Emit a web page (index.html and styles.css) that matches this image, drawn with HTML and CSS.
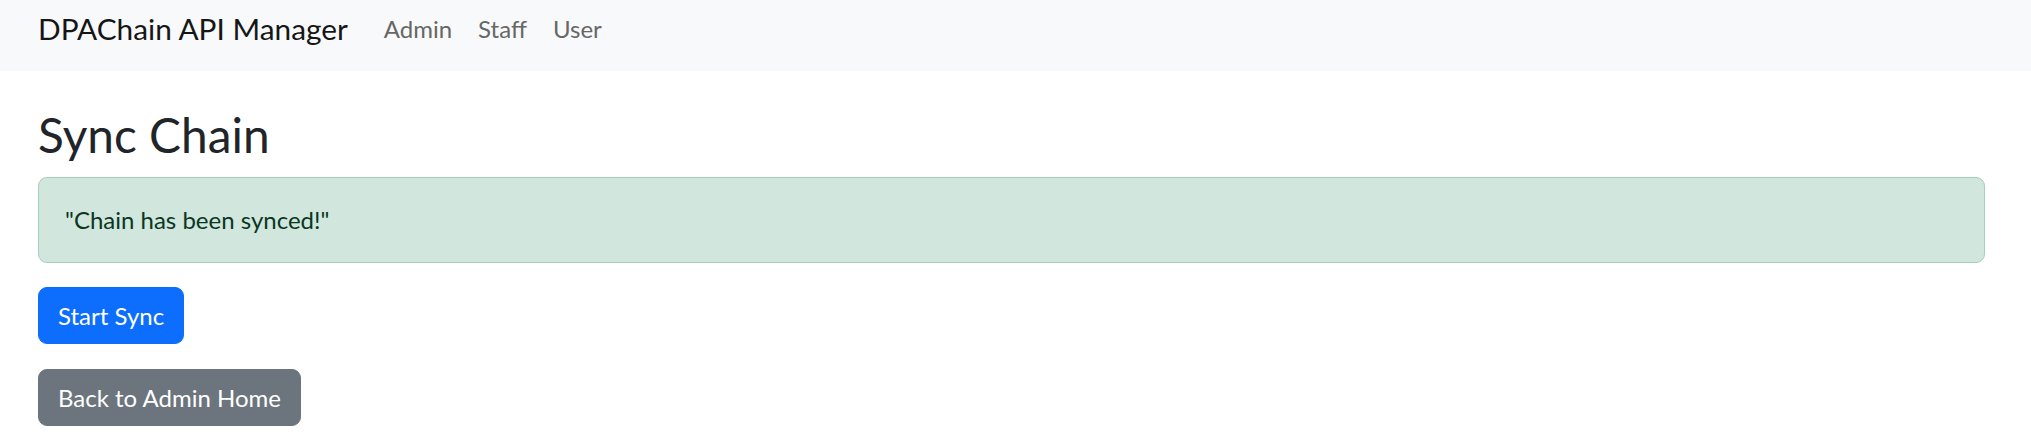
FILE: index.html
```html
<!DOCTYPE html>
<html lang="en">
<head>
<meta charset="utf-8">
<title>Sync Chain</title>
<link rel="stylesheet" href="styles.css">
</head>
<body>
<nav class="navbar">
  <a class="brand" href="#">DPAChain API Manager</a>
  <ul class="nav">
    <li><a class="nav-link" href="#">Admin</a></li>
    <li><a class="nav-link" href="#">Staff</a></li>
    <li><a class="nav-link" href="#">User</a></li>
  </ul>
</nav>
<main class="container">
  <h1 class="title">Sync Chain</h1>
  <div class="alert">"Chain has been synced!"</div>
  <div class="actions">
    <button class="btn btn-primary" type="button">Start Sync</button>
    <a class="btn btn-secondary" href="#">Back to Admin Home</a>
  </div>
</main>
</body>
</html>
```
FILE: styles.css
```css
* { box-sizing: border-box; }
body {
  margin: 0;
  font-family: Lato, "Liberation Sans", sans-serif;
  font-size: 24px;
  line-height: 1.5;
  color: #212529;
  background: #fff;
}
a { text-decoration: none; }

.navbar {
  display: flex;
  align-items: flex-start;
  height: 71px;
  padding: 6px 46px 0 38px;
  background: #f8f9fa;
}
.brand {
  font-size: 29.8px;
  line-height: 45px;
  color: #161616;
  margin-right: 23px;
}
.nav {
  display: flex;
  list-style: none;
  margin: 0;
  padding: 0;
}
.nav-link {
  display: block;
  padding: 0 13px;
  font-size: 24px;
  line-height: 45px;
  color: #676767;
}

.container {
  padding: 0 46px 0 38px;
}
.title {
  margin: 35px 0 14px;
  font-size: 47.8px;
  font-weight: 400;
  line-height: 1.2;
  color: #212529;
}
.alert {
  padding: 24px 24px 24px 26px;
  margin-bottom: 24px;
  line-height: 36px;
  color: #0a3622;
  background: #d1e7dd;
  border: 1px solid #a3cfbb;
  border-radius: 9px;
}
.actions {
  display: flex;
  flex-direction: column;
  align-items: flex-start;
  gap: 25px;
}
.btn {
  display: inline-block;
  padding: 9px 19px;
  font-family: inherit;
  font-size: 24px;
  line-height: 37px;
  color: #fff;
  border: 1px solid transparent;
  border-radius: 9px;
  cursor: pointer;
}
.btn-primary { background: #0d6efd; border-color: #0d6efd; }
.btn-secondary { background: #6c757d; border-color: #6c757d; }
```
